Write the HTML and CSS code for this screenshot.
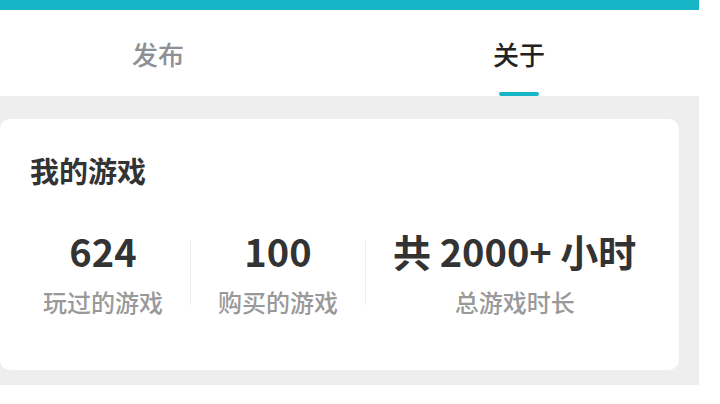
FILE: index.html
```html
<!DOCTYPE html>
<html lang="zh-CN">
<head>
<meta charset="utf-8">
<title>关于</title>
<link rel="stylesheet" href="styles.css">
</head>
<body>
<div class="page">
  <div class="topbar"></div>
  <div class="tabs">
    <div class="tab">
      <span class="tab-label">发布</span>
    </div>
    <div class="tab tab-active">
      <span class="tab-label">关于</span>
      <span class="tab-indicator"></span>
    </div>
  </div>
  <div class="content">
    <div class="card">
      <div class="card-title">我的游戏</div>
      <div class="stats">
        <div class="stat">
          <div class="stat-value">624</div>
          <div class="stat-label">玩过的游戏</div>
        </div>
        <div class="divider"></div>
        <div class="stat">
          <div class="stat-value">100</div>
          <div class="stat-label">购买的游戏</div>
        </div>
        <div class="divider"></div>
        <div class="stat">
          <div class="stat-value">共 2000+ 小时</div>
          <div class="stat-label">总游戏时长</div>
        </div>
      </div>
    </div>
  </div>
</div>
</body>
</html>
```

FILE: styles.css
```css
html, body {
  margin: 0;
  padding: 0;
  background: #ffffff;
}

body {
  font-family: "Noto Sans CJK SC", "Noto Sans", sans-serif;
  width: 720px;
  height: 404px;
  overflow: hidden;
}

.page {
  width: 699px;
}

.topbar {
  height: 10px;
  background: #16b6c6;
}

.tabs {
  display: flex;
  height: 86px;
  background: #ffffff;
}

.tab {
  width: 180px;
  display: flex;
  flex-direction: column;
  align-items: center;
  padding-top: 26px;
  box-sizing: border-box;
}

.tab:first-child {
  margin-left: 68px;
}

.tab + .tab {
  margin-left: 181px;
}

.tab-label {
  font-size: 26px;
  line-height: 36px;
  font-weight: 500;
  color: #8d9095;
}

.tab-active .tab-label {
  color: #222222;
}

.tab-indicator {
  position: relative;
  display: block;
  width: 40px;
  height: 5px;
  margin-top: 20px;
  border-radius: 3px;
  background: #16b6c6;
}

.content {
  background: #eeeeee;
  padding: 23px 20px 15px 0;
}

.card {
  background: #ffffff;
  border-radius: 10px;
  padding: 31px 0 52px 0;
}

.card-title {
  font-size: 29px;
  line-height: 40px;
  font-weight: 700;
  color: #333333;
  padding-left: 30px;
}

.stats {
  display: flex;
  align-items: stretch;
  margin-top: 37px;
  padding-left: 16px;
}

.stat {
  padding: 0 27px;
  text-align: center;
}

.stat-value {
  font-size: 38px;
  line-height: 48px;
  font-weight: 700;
  color: #333333;
  white-space: nowrap;
}

.stat-label {
  margin-top: 11px;
  font-size: 24px;
  line-height: 32px;
  font-weight: 500;
  color: #999999;
  white-space: nowrap;
}

.divider {
  width: 1px;
  height: 65px;
  align-self: center;
  background: #ececec;
}
```
